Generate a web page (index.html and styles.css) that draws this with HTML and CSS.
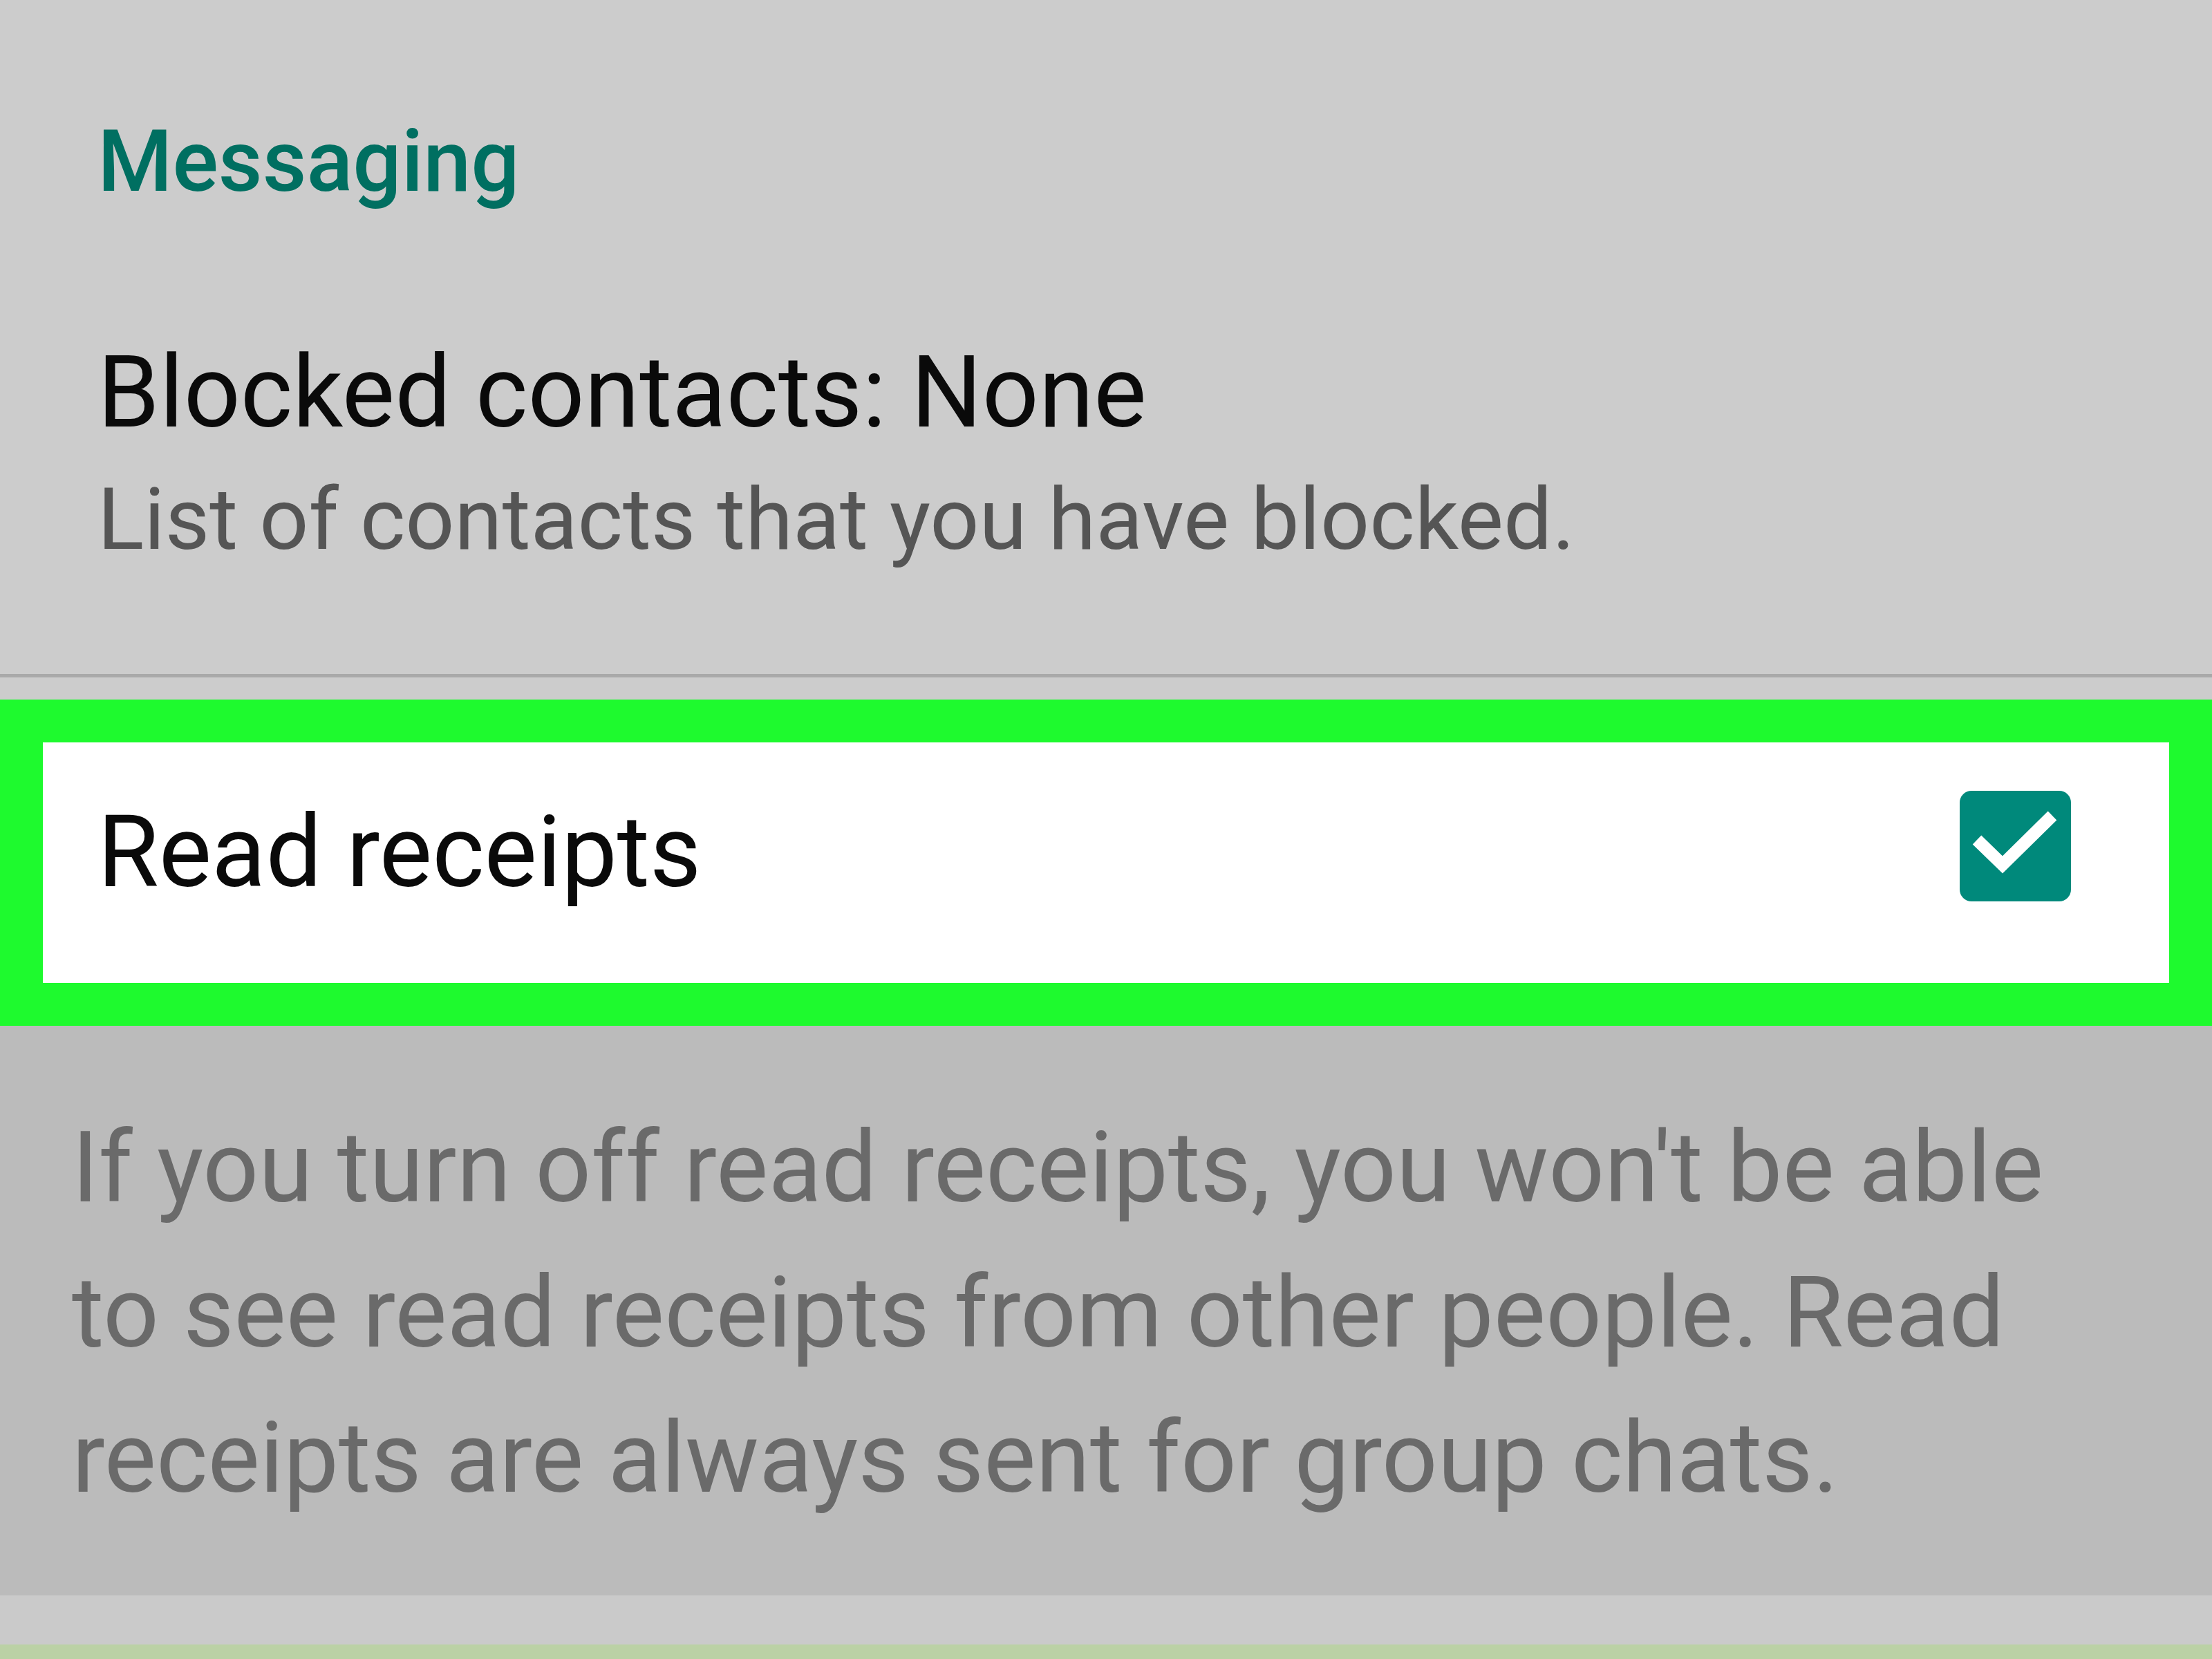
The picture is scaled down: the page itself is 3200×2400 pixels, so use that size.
FILE: index.html
```html
<!DOCTYPE html>
<html lang="en">
<head>
<meta charset="UTF-8">
<meta name="viewport" content="width=device-width, initial-scale=1.0">
<title>Privacy - Messaging</title>
<link rel="stylesheet" href="styles.css">
</head>
<body>
    <div id="screen">
        <div id="messaging">
            <h2 class="sectionTitle">Messaging</h2>
            <div class="row">
                <div class="rowTitle">Blocked contacts: None</div>
                <div class="rowSub">List of contacts that you have blocked.</div>
            </div>
        </div>
        <div class="divider"></div>
        <div id="highlight">
            <div id="receiptsRow">
                <div class="rowTitle receipts">Read receipts</div>
                <div class="checkbox">
                    <svg width="161" height="160" viewBox="0 0 161 160">
                        <rect x="0" y="0" width="161" height="160" rx="17" fill="#00897b"/>
                        <path d="M25 71 L62 107 L134 36" fill="none" stroke="#ffffff" stroke-width="18"/>
                    </svg>
                </div>
            </div>
        </div>
        <div id="note">
            <p>If you turn off read receipts, you won't be able to see read receipts from other people. Read receipts are always sent for group chats.</p>
        </div>
        <div class="strip"></div>
        <div class="bottomBar"></div>
    </div>
</body>
</html>
```

FILE: styles.css
```css
body {
    margin: 0;
    background-color: #cccccc;
    font-family: "Roboto", "Liberation Sans", sans-serif;
}
#screen {
    width: 3200px;
    height: 2400px;
    display: flex;
    flex-direction: column;
    overflow: hidden;
}
#messaging {
    padding-left: 141px;
    padding-top: 162px;
}
.sectionTitle {
    margin: 0;
    font-size: 124px;
    font-weight: 500;
    line-height: 143px;
    color: #006f61;
}
.row {
    margin-top: 180px;
}
.rowTitle {
    font-size: 144px;
    line-height: 166px;
    color: #0a0a0a;
}
.rowSub {
    margin-top: 26px;
    font-size: 125px;
    line-height: 150px;
    color: #555555;
}
.divider {
    margin-top: 148px;
    height: 5px;
    background-color: #a9a9a9;
}
#highlight {
    margin-top: 32px;
    border: 62px solid #1efa2e;
    background-color: #ffffff;
}
#receiptsRow {
    height: 348px;
    box-sizing: border-box;
    display: flex;
    justify-content: space-between;
    align-items: flex-start;
    padding: 70px 142px 0 79px;
}
.receipts {
    margin-top: 6px;
}
.checkbox {
    width: 161px;
    height: 160px;
}
.checkbox svg {
    display: block;
}
#note {
    background-color: #bbbbbb;
    padding: 101px 0 93px 104px;
}
#note p {
    margin: 0;
    width: 2950px;
    font-size: 142px;
    line-height: 210px;
    color: #6a6a6a;
}
.strip {
    height: 71px;
    background-color: #cacaca;
}
.bottomBar {
    flex: 1;
    background-color: #bbd1a5;
}
```
